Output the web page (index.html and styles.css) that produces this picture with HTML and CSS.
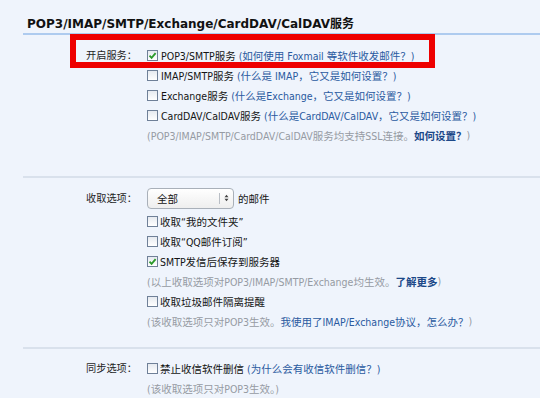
FILE: index.html
```html
<!DOCTYPE html>
<html lang="zh-CN">
<head>
  <meta charset="UTF-8" />
  <title>POP3/IMAP/SMTP/Exchange/CardDAV/CalDAV服务</title>
  <link rel="stylesheet" href="styles.css">
</head>
<body>

<div class="page">
  <div class="panel">
    <h2 class="title">POP3/IMAP/SMTP/Exchange/CardDAV/CalDAV服务</h2>

    <div class="section first">
      <div class="label">开启服务：</div>
      <div class="fields">
        <label class="row"><span class="box checked"><svg viewBox="0 0 9 9"><path d="M1.5 4.6 L3.6 6.8 L7.6 2.2" /></svg></span>POP3/SMTP服务 <a class="link" href="#">(如何使用 Foxmail 等软件收发邮件？)</a></label>
        <label class="row"><span class="box"></span>IMAP/SMTP服务 <a class="link" href="#">(什么是 IMAP，它又是如何设置？)</a></label>
        <label class="row"><span class="box"></span>Exchange服务 <a class="link" href="#">(什么是Exchange，它又是如何设置？)</a></label>
        <label class="row"><span class="box"></span>CardDAV/CalDAV服务 <a class="link" href="#">(什么是CardDAV/CalDAV，它又是如何设置？)</a></label>
        <div class="row note">(POP3/IMAP/SMTP/CardDAV/CalDAV服务均支持SSL连接。<a class="link strong" href="#">如何设置？</a>)</div>
      </div>
    </div>

    <div class="section second">
      <div class="label select-label">收取选项：</div>
      <div class="fields">
        <div class="row select-row">
          <div class="select">
            <span class="select-text">全部</span>
            <span class="select-arrow"><svg viewBox="0 0 6 10"><path d="M0.5 4 L3 1 L5.5 4 Z M0.5 6 L3 9 L5.5 6 Z" /></svg></span>
          </div>
          <span class="after">的邮件</span>
        </div>
        <label class="row tight"><span class="box"></span>收取“我的文件夹”</label>
        <label class="row tight"><span class="box"></span>收取“QQ邮件订阅”</label>
        <label class="row tight"><span class="box checked"><svg viewBox="0 0 9 9"><path d="M1.5 4.6 L3.6 6.8 L7.6 2.2" /></svg></span>SMTP发信后保存到服务器</label>
        <div class="row note">(以上收取选项对POP3/IMAP/SMTP/Exchange均生效。<a class="link strong" href="#">了解更多</a>)</div>
        <label class="row tight"><span class="box"></span>收取垃圾邮件隔离提醒</label>
        <div class="row note">(该收取选项只对POP3生效。<a class="link" href="#">我使用了IMAP/Exchange协议，怎么办？</a>)</div>
      </div>
    </div>

    <div class="section third">
      <div class="label">同步选项：</div>
      <div class="fields">
        <label class="row tight"><span class="box"></span>禁止收信软件删信 <a class="link" href="#">(为什么会有收信软件删信？)</a></label>
        <div class="row note">(该收取选项只对POP3生效。)</div>
      </div>
    </div>

    <!-- annotation frame around the first option -->
    <div class="highlight"></div>
  </div>
</div>

</body>
</html>
```

FILE: styles.css
```css
* {
  box-sizing: border-box;
}

body {
  margin: 0;
  background: #ffffff;
  font-family: 'DejaVu Sans Condensed', 'Liberation Sans', 'Noto Sans CJK SC', sans-serif;
  font-size: 10.5px;
  color: #141414;
}

.page {
  height: 398px;
  background: #eff4fc;
  padding-left: 23px;
  overflow: hidden;
}

.panel {
  position: relative;
}

.title {
  margin: 0;
  padding: 15px 0 0 4px;
  height: 35px;
  line-height: 18px;
  font-family: 'DejaVu Sans', 'Noto Sans CJK SC', sans-serif;
  font-size: 12px;
  font-weight: bold;
  color: #111;
  border-bottom: 2px solid #aecbef;
}

.section {
  display: grid;
  grid-template-columns: 114px 1fr;
  column-gap: 10px;
  border-bottom: 2px solid #d9e1ec;
}

.section.first {
  padding: 10px 0 31px;
}

.section.second {
  padding: 9px 0 16px;
}

.section.third {
  padding: 9px 0 0;
  border-bottom: none;
}

.label {
  text-align: right;
  line-height: 20px;
  color: #1e1e1e;
  font-family: 'Noto Sans CJK SC', sans-serif;
  font-size: 10.2px;
}

.select-label {
  line-height: 22px;
}

.fields {
  display: flex;
  flex-direction: column;
}

.row {
  display: flex;
  align-items: center;
  height: 20px;
  white-space: nowrap;
}

.row .link {
  margin-left: 3px;
}

.note {
  color: #969ba3;
}

.note .link {
  margin-left: 0;
}

.link {
  color: #2a5aa0;
  text-decoration: none;
}

.link.strong {
  color: #1c4888;
  font-weight: bold;
}

.box {
  width: 11px;
  height: 11px;
  margin-right: 3px;
  border: 1px solid #6f8098;
  background: linear-gradient(#e6eaf0, #ffffff);
  display: flex;
  align-items: center;
  justify-content: center;
  flex-shrink: 0;
}

.tight .box {
  margin-right: 2px;
}

.box svg {
  width: 9px;
  height: 9px;
}

.box svg path {
  fill: none;
  stroke: #2a9a2a;
  stroke-width: 1.8;
}

.select-row {
  height: 22px;
  margin-bottom: 2px;
}

.select {
  width: 87px;
  height: 21px;
  border: 1px solid #a9b0b9;
  border-radius: 4px;
  background: linear-gradient(#ffffff, #eeeeee);
  display: flex;
  align-items: center;
  justify-content: space-between;
  padding-left: 9px;
}

.select-arrow {
  display: flex;
  align-items: center;
  height: 11px;
  margin-right: 4px;
  border-left: 1px solid #b9bec5;
  padding-left: 4px;
}

.select-arrow svg {
  width: 5px;
  height: 8px;
}

.select-arrow path {
  fill: #444;
}

.after {
  margin-left: 4px;
}

.highlight {
  position: absolute;
  left: 47px;
  top: 34px;
  width: 365px;
  height: 34px;
  border: 6px solid #ee0000;
}
```
